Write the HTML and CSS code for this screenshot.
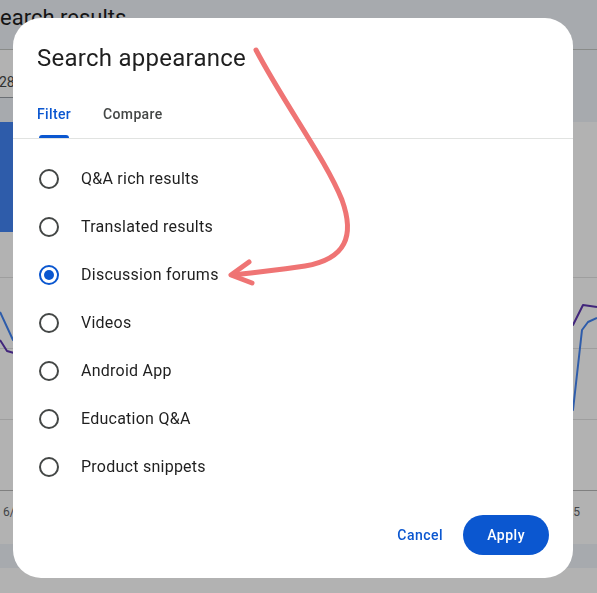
FILE: index.html
```html
<!DOCTYPE html>
<html lang="en">
<head>
<meta charset="utf-8">
<title>Search appearance</title>
<link rel="stylesheet" href="styles.css">
</head>
<body>
<div class="page">
  <header class="topbar"><h1 class="page-title">Search results</h1></header>
  <div class="toolbar"><div class="chip">28 days</div></div>
  <section class="perf-card">
    <div class="metrics"><div class="metric metric-clicks"></div></div>
    <div class="chart">
      <div class="gridline"></div>
      <div class="gridline"></div>
      <div class="gridline"></div>
      <div class="gridline axis-line"></div>
      <svg class="chart-lines" viewBox="0 0 597 259" preserveAspectRatio="none">
        <polyline class="series-impr" points="0,108 7,119 14,121 120,130 300,150 480,120 573,93 583,73 597,75"/>
        <polyline class="series-clicks" points="0,80 13,108 120,140 300,170 480,160 573,178 582,98 588,90 597,86"/>
      </svg>
    </div>
    <div class="axis"><span class="tick tick-first">6/25</span><span class="tick">4/25</span></div>
  </section>
  <div class="band"></div>
</div>
<div class="scrim"></div>
<div class="dialog" role="dialog">
  <h2 class="dialog-title">Search appearance</h2>
  <div class="tabs">
    <div class="tab active"><span class="tab-label">Filter</span></div>
    <div class="tab"><span class="tab-label">Compare</span></div>
  </div>
  <ul class="options">
    <li class="option"><span class="radio"></span><span class="option-label">Q&amp;A rich results</span></li>
    <li class="option"><span class="radio"></span><span class="option-label">Translated results</span></li>
    <li class="option"><span class="radio checked"></span><span class="option-label">Discussion forums</span></li>
    <li class="option"><span class="radio"></span><span class="option-label">Videos</span></li>
    <li class="option"><span class="radio"></span><span class="option-label">Android App</span></li>
    <li class="option"><span class="radio"></span><span class="option-label">Education Q&amp;A</span></li>
    <li class="option"><span class="radio"></span><span class="option-label">Product snippets</span></li>
  </ul>
  <div class="actions">
    <button class="btn btn-text">Cancel</button>
    <button class="btn btn-filled">Apply</button>
  </div>
</div>
<svg class="annotation" viewBox="0 0 597 593">
  <path d="M256,50 C285,105 326,160 342,200 C355,236 346,259 305,266 C280,270 256,272 233,275"/>
  <path d="M249,262 L231,275 L252,283"/>
</svg>
</body>
</html>
```
FILE: styles.css
```css
* { box-sizing: border-box; }
html, body { margin: 0; padding: 0; }
body {
  width: 597px;
  height: 593px;
  overflow: hidden;
  position: relative;
  background: #ffffff;
  font-family: Roboto, "Noto Sans", "Liberation Sans", sans-serif;
}

/* Background page */
.page { display: flex; flex-direction: column; height: 593px; }
.topbar {
  height: 50px;
  flex-shrink: 0;
  background: #f0f4f9;
  border-bottom: 1px solid #c4c7c5;
  overflow: hidden;
}
.page-title {
  margin: 0 0 0 -13px;
  padding-top: 4px;
  font-size: 22px;
  line-height: 28px;
  font-weight: 400;
  color: #1f1f1f;
  white-space: nowrap;
}
.toolbar {
  height: 72px;
  flex-shrink: 0;
  background: #f0f4f9;
}
.chip {
  width: 140px;
  height: 48px;
  margin-left: -1px;
  padding-top: 22px;
  background: #ffffff;
  border-bottom: 1px solid #9aa0a6;
  font-size: 14px;
  line-height: 20px;
  color: #444746;
}
.perf-card { display: flex; flex-direction: column; background: #ffffff; }
.metrics { height: 110px; display: flex; }
.metric-clicks { flex: 0 0 150px; margin-left: -137px; background: #4285f4; }
.chart {
  position: relative;
  height: 259px;
  padding-top: 45px;
  display: flex;
  flex-direction: column;
  gap: 70px;
}
.gridline { height: 1px; background: #e3e3e3; }
.gridline.axis-line { background: #b8b8b8; }
.chart-lines {
  position: absolute;
  left: 0;
  top: 0;
  width: 597px;
  height: 259px;
  fill: none;
  stroke-width: 2;
  stroke-linejoin: round;
}
.series-clicks { stroke: #4285f4; }
.series-impr { stroke: #5e35b1; }
.axis {
  height: 53px;
  display: flex;
  justify-content: space-between;
  padding: 13px 17px 0 0;
  font-size: 12px;
  line-height: 16px;
  color: #5f6368;
}
.tick-first { margin-left: 3px; }
.band { height: 24px; background: #f0f4f9; flex-shrink: 0; }

.scrim {
  position: fixed;
  inset: 0;
  background: rgba(0, 0, 0, 0.3);
}

/* Dialog */
.dialog {
  position: absolute;
  left: 13px;
  top: 18px;
  width: 560px;
  height: 560px;
  background: #ffffff;
  border-radius: 28px;
  display: flex;
  flex-direction: column;
  overflow: hidden;
}
.dialog-title {
  margin: 0;
  padding: 24px 24px 0;
  font-size: 24px;
  line-height: 32px;
  font-weight: 400;
  letter-spacing: 0.25px;
  color: #1f1f1f;
}
.tabs {
  display: flex;
  margin-top: 16px;
  padding: 0 8px;
  border-bottom: 1px solid #e1e3e1;
}
.tab {
  height: 48px;
  padding: 0 16px;
  display: flex;
  font-size: 14px;
  font-weight: 500;
  letter-spacing: 0.35px;
  color: #444746;
}
.tab.active { color: #0b57d0; }
.tab-label { position: relative; display: flex; align-items: center; height: 100%; }
.tab.active .tab-label::after {
  content: "";
  position: absolute;
  left: 2px;
  right: 2px;
  bottom: 0;
  height: 3px;
  background: #0b57d0;
  border-radius: 3px 3px 0 0;
}
.options { list-style: none; margin: 0; padding: 16px 0 0; }
.option {
  height: 48px;
  display: flex;
  align-items: center;
  gap: 22px;
  padding-left: 26px;
}
.radio {
  width: 20px;
  height: 20px;
  flex-shrink: 0;
  border: 2px solid #444746;
  border-radius: 50%;
  display: flex;
  align-items: center;
  justify-content: center;
}
.radio.checked { border-color: #0b57d0; }
.radio.checked::after {
  content: "";
  width: 10px;
  height: 10px;
  border-radius: 50%;
  background: #0b57d0;
}
.option-label { font-size: 16px; line-height: 24px; letter-spacing: 0.25px; color: #1f1f1f; }
.actions {
  margin-top: auto;
  display: flex;
  justify-content: flex-end;
  gap: 8px;
  padding: 0 24px 23px;
}
.btn {
  height: 40px;
  border: none;
  border-radius: 20px;
  font-family: inherit;
  font-size: 14px;
  font-weight: 500;
  letter-spacing: 0.5px;
  cursor: pointer;
}
.btn-text { padding: 0 12px; background: transparent; color: #0b57d0; }
.btn-filled { padding: 0 24px; background: #0b57d0; color: #ffffff; }

/* Annotation arrow */
.annotation {
  position: fixed;
  left: 0;
  top: 0;
  width: 597px;
  height: 593px;
  pointer-events: none;
  fill: none;
  stroke: #ef7474;
  stroke-width: 5;
  stroke-linecap: round;
  stroke-linejoin: round;
}
```
